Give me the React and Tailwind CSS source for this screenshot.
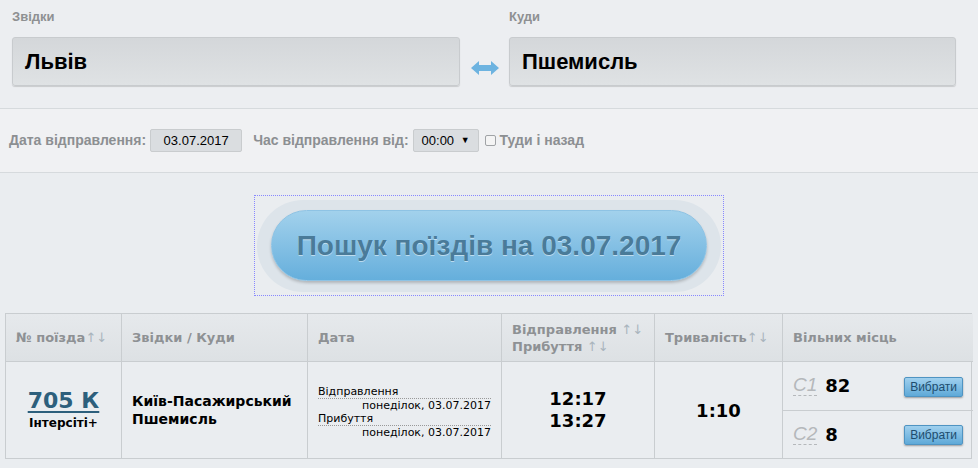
import React from "react";

const narrow = { fontFamily: '"Liberation Sans Narrow","Liberation Sans",Arial,sans-serif' };
const verd = { fontFamily: '"DejaVu Sans",Verdana,sans-serif' };

function Sort() {
  return <span className="text-[#a9b4bd] font-normal">↑↓</span>;
}

function Pick() {
  return (
    <button className="h-[20px] px-[5px] rounded-[2px] border border-[#4f94c2] bg-gradient-to-b from-[#9fd0ee] to-[#5ea9d8] text-[#1d4d6e] text-[12px] shadow-[0_1px_2px_rgba(0,0,0,0.35)]" style={{ fontFamily: '"Liberation Sans Narrow","Liberation Sans",sans-serif' }}>
      Вибрати
    </button>
  );
}

export default function App() {
  return (
    <div className="w-[978px] h-[468px] bg-[#eaedf0] overflow-hidden" style={narrow}>
      <div className="bg-[#eceef1] h-[109px] border-b border-[#d6dadd] px-[12px] pt-[7px]">
        <div className="flex">
          <div className="w-[448px]">
            <div className="text-[13px] font-bold text-[#8e9092] h-[30px]">Звідки</div>
            <div className="h-[49px] rounded-[3px] bg-gradient-to-b from-[#d4d7da] to-[#dfe2e4] border border-[#c8cbce] shadow-[0_1px_1px_rgba(0,0,0,0.15)] flex items-center px-[12px] text-[22px] font-bold text-black">Львів</div>
          </div>
          <div className="w-[49px] flex items-end justify-center pb-[10px]">
            <svg width="30" height="16" viewBox="0 0 30 16">
              <path d="M1 8 L9 1 L9 5 L21 5 L21 1 L29 8 L21 15 L21 11 L9 11 L9 15 Z" fill="#6db3e0" />
            </svg>
          </div>
          <div className="w-[447px]">
            <div className="text-[13px] font-bold text-[#8e9092] h-[30px]">Куди</div>
            <div className="h-[49px] rounded-[3px] bg-gradient-to-b from-[#d4d7da] to-[#dfe2e4] border border-[#c8cbce] shadow-[0_1px_1px_rgba(0,0,0,0.15)] flex items-center px-[12px] text-[22px] font-bold text-black">Пшемисль</div>
          </div>
        </div>
      </div>
      <div className="bg-[#f0f1f3] h-[64px] border-b border-[#d6dadd] flex items-center px-[9px] text-[14px] font-bold text-[#8c8f92]">
        <span>Дата відправлення:</span>
        <span className="ml-[4px] h-[23px] w-[92px] rounded-[2px] bg-[#dadde0] border border-[#c9ccce] flex items-center justify-center text-[13px] font-normal text-black">03.07.2017</span>
        <span className="ml-[11px]">Час відправлення від:</span>
        <span className="ml-[4px] h-[23px] w-[66px] rounded-[2px] bg-[#dadde0] border border-[#c9ccce] flex items-center justify-between px-[8px] text-[13px] font-normal text-black">00:00<span className="text-[9px]">▼</span></span>
        <span className="ml-[6px] w-[11px] h-[11px] border border-[#a0a3a6] rounded-[2px] bg-[#f4f4f4]"></span>
        <span className="ml-[4px]">Туди і назад</span>
      </div>
      <div className="flex justify-center pt-[22px]">
        <div className="w-[470px] h-[101px] border border-dotted border-[#8888ff] flex items-center justify-center">
          <div className="w-[464px] h-[92px] rounded-full bg-[#dde4ea] flex items-center justify-center">
            <div className="w-[436px] h-[71px] rounded-full bg-gradient-to-b from-[#a2d1ec] to-[#65afdc] border border-[#8ec3e4] shadow-[0_2px_3px_rgba(0,0,0,0.2)] flex items-center justify-center text-[28px] font-bold text-[#4a7b99]" style={{ fontFamily: '"Liberation Sans",Arial,sans-serif', textShadow: "0 1px 0 rgba(255,255,255,0.5)" }}>
              Пошук поїздів на 03.07.2017
            </div>
          </div>
        </div>
      </div>
      <div className="px-[5px] pt-[17px]" style={verd}>
        <div className="grid grid-cols-[115px_186px_194px_153px_128px_191px] border border-[#c9cdd0] w-[967px]">
          {[
            <>№ поїзда <Sort /></>,
            <>Звідки / Куди</>,
            <>Дата</>,
            <div className="leading-[17px]">Відправлення <Sort /><br />Прибуття <Sort /></div>,
            <>Тривалість <Sort /></>,
            <>Вільних місць</>,
          ].map((c, i) => (
            <div key={i} className={`h-[48px] bg-gradient-to-b from-[#e6e9ec] to-[#dde1e4] border-b border-[#c9cdd0] ${i ? "border-l" : ""} border-[#c9cdd0] flex items-center px-[10px] text-[13px] font-bold text-[#8e9194]`}>{c}</div>
          ))}
          <div className="h-[96px] flex flex-col items-center justify-center">
            <span className="text-[22px] font-bold text-[#2d5f7c] underline underline-offset-[3px] leading-[26px]">705 К</span>
            <span className="text-[12px] font-bold text-black">Інтерсіті+</span>
          </div>
          <div className="border-l border-[#c9cdd0] flex flex-col justify-center px-[10px] text-[14px] font-bold text-black leading-[18px]">
            <span>Київ-Пасажирський</span>
            <span>Пшемисль</span>
          </div>
          <div className="border-l border-[#c9cdd0] flex flex-col justify-center px-[10px] text-[11px] text-black leading-[13px] pt-[4px]">
            <span className="border-b border-dotted border-[#999]">Відправлення</span>
            <span className="text-right">понеділок, 03.07.2017</span>
            <span className="border-b border-dotted border-[#999]">Прибуття</span>
            <span className="text-right">понеділок, 03.07.2017</span>
          </div>
          <div className="border-l border-[#c9cdd0] flex flex-col items-center justify-center text-[18px] font-bold text-black leading-[22px]">
            <span>12:17</span>
            <span>13:27</span>
          </div>
          <div className="border-l border-[#c9cdd0] flex items-center justify-center text-[18px] font-bold text-black">1:10</div>
          <div className="border-l border-[#c9cdd0] flex flex-col">
            {[["С1", "82"], ["С2", "8"]].map(([k, n], i) => (
              <div key={k} className={`flex-1 flex items-center px-[10px] ${i ? "border-t border-[#c9cdd0]" : ""}`}>
                <span className="text-[19px] italic text-[#b5b8bb] border-b border-dashed border-[#b5b8bb] leading-[20px]" style={{ fontFamily: '"Liberation Sans",Arial,sans-serif' }}>{k}</span>
                <span className="ml-[8px] text-[18px] font-bold text-black">{n}</span>
                <span className="ml-auto"><Pick /></span>
              </div>
            ))}
          </div>
        </div>
      </div>
    </div>
  );
}
